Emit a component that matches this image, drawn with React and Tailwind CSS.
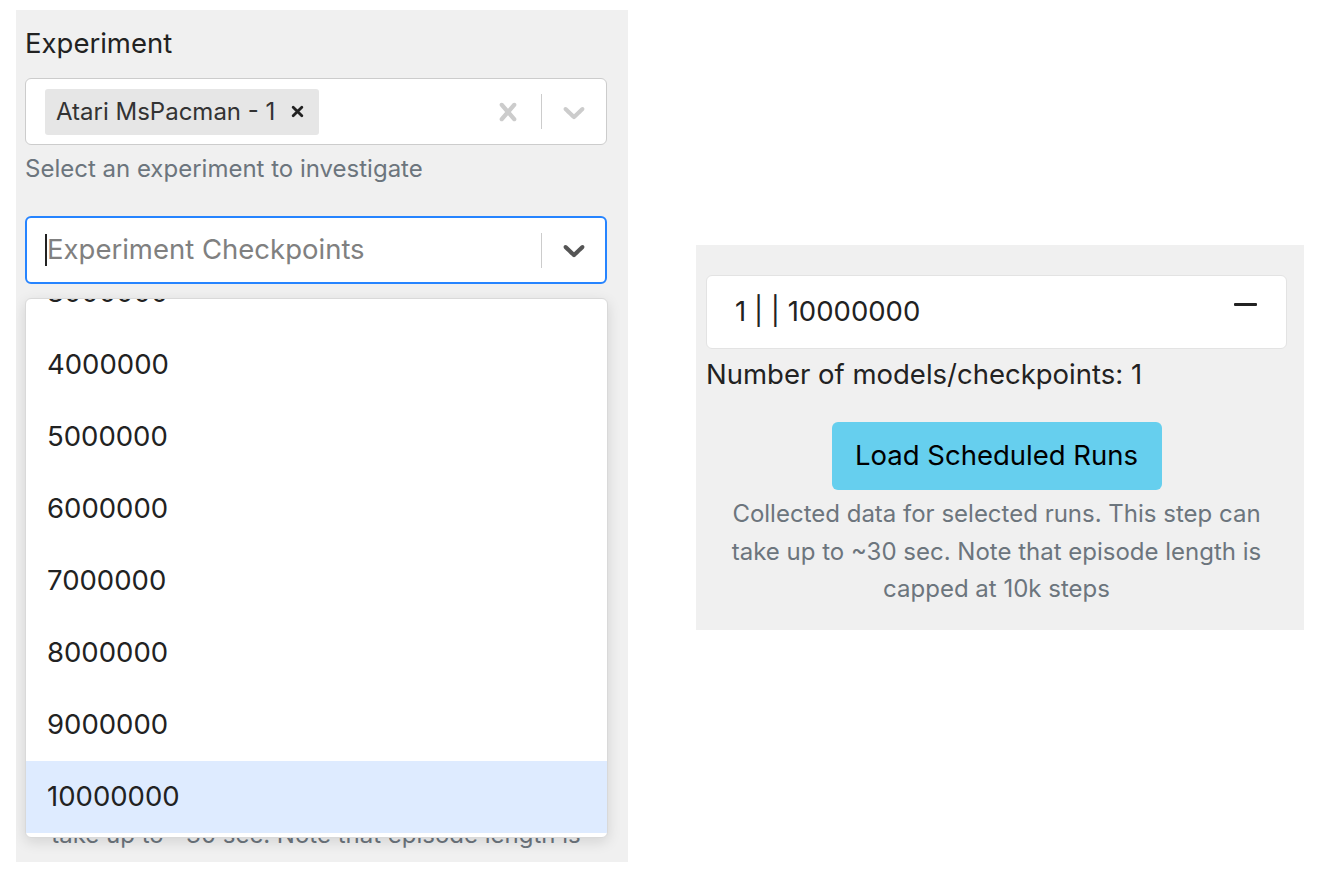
import React from "react";

const font = { fontFamily: "Inter, 'Noto Sans', sans-serif" };

const checkpoints = [
    "3000000",
    "4000000",
    "5000000",
    "6000000",
    "7000000",
    "8000000",
    "9000000",
    "10000000",
];

function CrossIcon({ color }) {
    return (
        <svg width="36" height="36" viewBox="0 0 20 20" fill={color}>
            <path d="M14.348 14.849c-0.469 0.469-1.229 0.469-1.697 0l-2.651-3.030-2.651 3.029c-0.469 0.469-1.229 0.469-1.697 0-0.469-0.469-0.469-1.229 0-1.697l2.758-3.15-2.759-3.152c-0.469-0.469-0.469-1.228 0-1.697s1.228-0.469 1.697 0l2.652 3.031 2.651-3.031c0.469-0.469 1.228-0.469 1.697 0s0.469 1.229 0 1.697l-2.758 3.152 2.758 3.15c0.469 0.469 0.469 1.229 0 1.698z" />
        </svg>
    );
}

function ChevronIcon({ color }) {
    return (
        <svg width="36" height="36" viewBox="0 0 20 20" fill={color}>
            <path d="M4.516 7.548c0.436-0.446 1.043-0.481 1.576 0l3.908 3.747 3.908-3.747c0.533-0.481 1.141-0.446 1.574 0 0.436 0.445 0.408 1.197 0 1.615-0.406 0.418-4.695 4.502-4.695 4.502-0.217 0.223-0.502 0.335-0.787 0.335s-0.57-0.112-0.789-0.335c0 0-4.287-4.084-4.695-4.502s-0.436-1.17 0-1.615z" />
        </svg>
    );
}

function SmallCross() {
    return (
        <svg width="13" height="13" viewBox="0 0 12 12" stroke="#222" strokeWidth="2.6" strokeLinecap="round">
            <path d="M2 2L10 10M10 2L2 10" />
        </svg>
    );
}

function Description() {
    return (
        <p className="text-[24px] leading-[37.5px] text-[#6c757d] text-center px-[14px]">
            Collected data for selected runs. This step can take up to ~30 sec. Note that episode length is capped at 10k steps
        </p>
    );
}

export default function App() {
    return (
        <div className="min-h-screen bg-white text-[#212529]" style={font}>
            <div className="flex items-start pt-[10px] pl-[16px]">

                {/* Left panel */}
                <div className="relative w-[612px] h-[852px] bg-[#f0f0f0] overflow-hidden pl-[9px] pr-[21px] pt-[15px]">
                    <div className="text-[27.5px] leading-[36px] text-[#222]">Experiment</div>

                    {/* multi select */}
                    <div className="mt-[17px] h-[67px] bg-white border border-[#cccccc] rounded-[6px] flex items-center">
                        <div className="flex-1 pl-[19px]">
                            <div className="inline-flex items-center h-[46px] bg-[#e6e6e6] rounded-[3px] pl-[11px] pr-[15px]">
                                <span className="text-[24px] text-[#333]">Atari MsPacman - 1</span>
                                <span className="ml-[16px] flex items-center">
                                    <SmallCross />
                                </span>
                            </div>
                        </div>
                        <div className="w-[66px] flex items-center justify-center">
                            <CrossIcon color="#cccccc" />
                        </div>
                        <div className="w-px h-[35px] bg-[#cccccc]" />
                        <div className="w-[64px] flex items-center justify-center">
                            <ChevronIcon color="#cccccc" />
                        </div>
                    </div>

                    <div className="text-[24px] leading-[32px] text-[#6c757d] mt-[8px]">
                        Select an experiment to investigate
                    </div>

                    {/* checkpoint select */}
                    <div className="relative mt-[31px]">
                        <div className="h-[68px] bg-white border-2 border-[#2684ff] rounded-[6px] flex items-center">
                            <div className="flex-1 flex items-center pl-[18px]">
                                <span className="w-[2px] h-[32px] bg-[#222]" />
                                <span className="text-[27.5px] text-[#808080]">Experiment Checkpoints</span>
                            </div>
                            <div className="w-px h-[35px] bg-[#cccccc]" />
                            <div className="w-[63px] flex items-center justify-center">
                                <ChevronIcon color="#555555" />
                            </div>
                        </div>

                        {/* open menu */}
                        <div className="absolute left-0 w-[583px] top-full mt-[14px] h-[540px] bg-white border border-[#d9d9d9] rounded-[6px] shadow-[0_4px_14px_rgba(0,0,0,0.12)] overflow-hidden z-10">
                            <div className="-mt-[42px]">
                                {checkpoints.map((c) => (
                                    <div
                                        key={c}
                                        className={`h-[72px] flex items-center pl-[21px] text-[27.5px] text-[#222] ${c === "10000000" ? "bg-[#deebff]" : ""}`}
                                    >
                                        {c}
                                    </div>
                                ))}
                            </div>
                        </div>
                    </div>

                    {/* content hidden behind the menu */}
                    <div className="mt-[373px] text-[27.5px] leading-[36px] text-[#222]">
                        Number of models/checkpoints: 0
                    </div>
                    <div className="flex justify-center mt-[12px]">
                        <div className="w-[330px] h-[68px] rounded-[6px] bg-[#66cfee] flex items-center justify-center text-[27.5px] text-black">
                            Load Scheduled Runs
                        </div>
                    </div>
                    <div className="mt-[5px]">
                        <Description />
                    </div>
                </div>

                {/* Right panel */}
                <div className="ml-[68px] mt-[235px] w-[608px] h-[385px] bg-[#f0f0f0] pl-[10px] pr-[17px] pt-[30px]">
                    <div className="h-[74px] bg-white border border-[#e3e3e3] rounded-[6px] flex items-center pl-[28px] pr-[29px]">
                        <span className="flex-1 text-[27.5px] text-[#222]">1 | | 10000000</span>
                        <span className="w-[23px] h-[3px] bg-[#222] rounded-[1px] mb-[16px]" />
                    </div>
                    <div className="mt-[7px] text-[27.5px] leading-[36px] text-[#222]">
                        Number of models/checkpoints: 1
                    </div>
                    <div className="flex justify-center mt-[30px]">
                        <div className="w-[330px] h-[68px] rounded-[6px] bg-[#66cfee] flex items-center justify-center text-[27.5px] text-black">
                            Load Scheduled Runs
                        </div>
                    </div>
                    <div className="mt-[5px]">
                        <Description />
                    </div>
                </div>
            </div>
        </div>
    );
}
